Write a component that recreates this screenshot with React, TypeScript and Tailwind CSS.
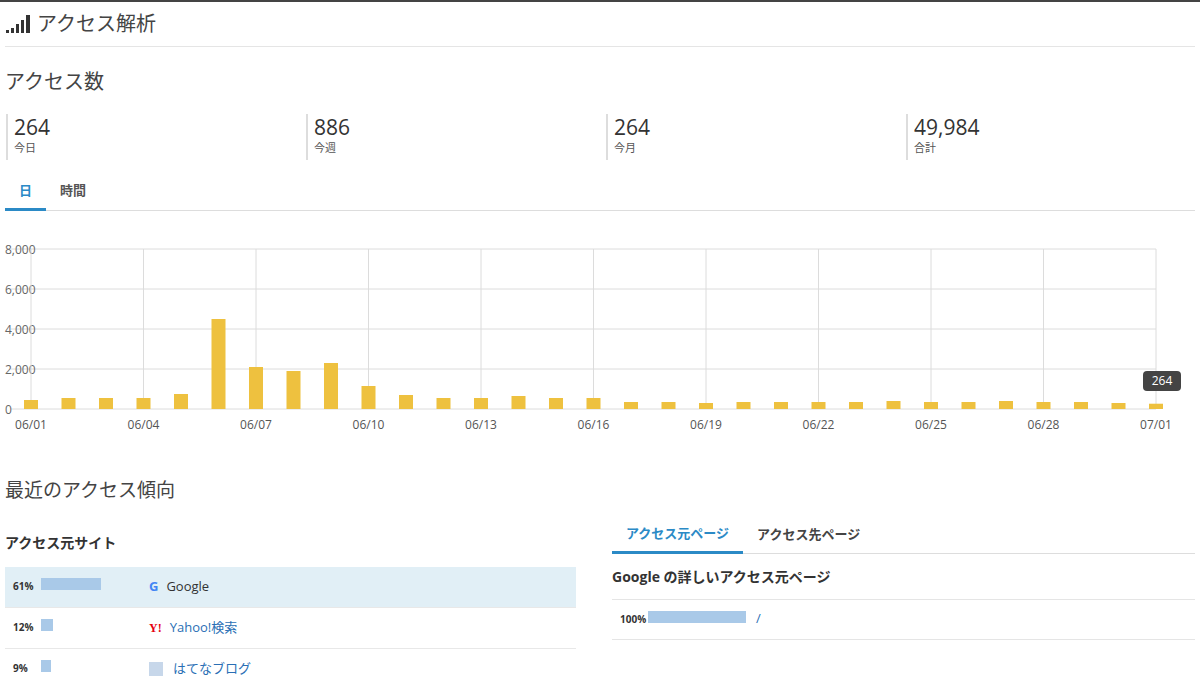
import React from "react";

const vals = [450,550,550,550,750,4500,2100,1900,2300,1150,700,550,550,650,550,550,350,350,300,350,350,350,350,400,350,350,400,350,350,300,264];
const labels = ["06/01","06/04","06/07","06/10","06/13","06/16","06/19","06/22","06/25","06/28","07/01"];

function Chart() {
  const x0 = 31, dx = 37.5, y0 = 409, h = 160;
  const X = (i: number) => x0 + i * dx;
  return (
    <svg width="1200" height="200" viewBox="0 240 1200 200" className="block">
      {[0, 2000, 4000, 6000, 8000].map((v) => {
        const y = y0 - (v / 8000) * h;
        return (
          <g key={v}>
            <line x1={x0 - 20} x2={1156} y1={y} y2={y} stroke="#dcdcdc" />
            <text x={5} y={y + 5} fontSize="12" fill="#666" fontFamily="'Open Sans',sans-serif">{v.toLocaleString()}</text>
          </g>
        );
      })}
      {labels.map((l, k) => (
        <g key={l}>
          <line x1={X(k * 3)} x2={X(k * 3)} y1={249} y2={409} stroke="#dcdcdc" />
          <text x={X(k * 3)} y={429} fontSize="12" fill="#555" textAnchor="middle" fontFamily="'Open Sans',sans-serif">{l}</text>
        </g>
      ))}
      {vals.map((v, i) => {
        const bh = (v / 8000) * h;
        return <rect key={i} x={X(i) - 7} y={y0 - bh} width={14} height={bh} fill="#eec13f" />;
      })}
      <rect x={1143} y={371} width={38} height={20} rx={4} fill="#444" />
      <text x={1162} y={385} fontSize="12" fill="#fff" textAnchor="middle" fontFamily="'Open Sans',sans-serif">264</text>
    </svg>
  );
}

function Stat({ n, l }: { n: string; l: string }) {
  return (
    <div className="w-[303px] pl-[6px]">
      <div className="border-l-2 border-[#ddd] pl-[6px] h-[46px]">
        <div className="text-[21px] leading-[26px] text-[#333]">{n}</div>
        <div className="text-[11px] leading-[16px] text-[#555]">{l}</div>
      </div>
    </div>
  );
}

export default function App() {
  return (
    <div className="w-[1200px] h-[677px] overflow-hidden bg-white border-t-2 border-[#444] text-[#333]" style={{ fontFamily: "'Open Sans','Noto Sans CJK JP',sans-serif" }}>
      <div className="mx-[5px] h-[45px] border-b border-[#e5e5e5] flex items-center gap-[4px]">
        <svg width="28" height="22" viewBox="0 0 28 22">
          <rect x="1" y="17" width="3" height="3" fill="#333" />
          <rect x="6" y="15" width="3" height="5" fill="#333" />
          <rect x="11" y="11" width="3" height="9" fill="#333" />
          <rect x="16" y="7" width="3" height="13" fill="#333" />
          <rect x="21" y="2" width="4" height="18" fill="#333" />
        </svg>
        <span className="text-[20px] text-[#444]">アクセス解析</span>
      </div>
      <div className="px-[5px] pt-[21px] text-[20px] leading-[28px] text-[#444]">アクセス数</div>
      <div className="flex mt-[18px]">
        <Stat n="264" l="今日" />
        <Stat n="886" l="今週" />
        <Stat n="264" l="今月" />
        <Stat n="49,984" l="合計" />
      </div>
      <div className="flex mx-[5px] mt-[21px] border-b border-[#ddd] text-[13px] font-bold">
        <div className="w-[41px] text-center pb-[7px] text-[#2b8ac6] border-b-[3px] border-[#2b8ac6] -mb-[1px]">日</div>
        <div className="px-[14px] pb-[7px] text-[#555]">時間</div>
      </div>
      <div className="mt-[29px]"><Chart /></div>
      <div className="px-[5px] mt-[37px] text-[19px] leading-[26px] text-[#444]">最近のアクセス傾向</div>
      <div className="flex px-[5px] mt-[12px] gap-[36px]">
        <div className="w-[571px]">
          <div className="text-[14px] font-bold pt-[17px] h-[52px]">アクセス元サイト</div>
          {[
            { p: "61%", w: 60, n: "Google", bg: true },
            { p: "12%", w: 12, n: "Yahoo!検索" },
            { p: "9%", w: 10, n: "はてなブログ" },
          ].map((r, i) => (
            <div key={i} className={"flex items-center h-[41px] border-b border-[#e8e8e8] " + (r.bg ? "bg-[#e1eff6]" : "")}>
              <span className="w-[36px] pl-[8px] text-[10px] font-bold">{r.p}</span>
              <span className="w-[108px]"><span className="block h-[12px] bg-[#a9c9e8] -mt-[6px]" style={{ width: r.w }} /></span>
              {i === 0 && <span className="text-[13px] font-bold mr-[8px] text-[#4285f4]">G</span>}
              {i === 1 && <span className="text-[12px] font-bold mr-[8px] text-[#e60012]" style={{ fontFamily: "'Liberation Serif',serif" }}>Y!</span>}
              {i === 2 && <span className="w-[14px] h-[14px] mr-[10px] bg-[#c7d7ea] inline-block" />}
              <span className={"text-[13px] " + (i === 0 ? "text-[#333]" : "text-[#2a6fb5]")}>{r.n}</span>
            </div>
          ))}
        </div>
        <div className="flex-1 pt-[8px]">
          <div className="flex border-b border-[#ddd] text-[13px] font-bold h-[31px] items-end">
            <div className="px-[14px] pb-[7px] text-[#2b8ac6] border-b-[3px] border-[#2b8ac6] -mb-[1px]">アクセス元ページ</div>
            <div className="px-[14px] pb-[8px] text-[#444]">アクセス先ページ</div>
          </div>
          <div className="text-[14px] font-bold h-[46px] flex items-center border-b border-[#e5e5e5]">Google の詳しいアクセス元ページ</div>
          <div className="flex items-center h-[40px] border-b border-[#e5e5e5]">
            <span className="w-[36px] pl-[8px] text-[10px] font-bold">100%</span>
            <span className="block h-[12px] w-[98px] bg-[#a9c9e8] mr-[10px] -mt-[4px]" />
            <span className="text-[13px] text-[#2a6fb5]">/</span>
          </div>
        </div>
      </div>
    </div>
  );
}
